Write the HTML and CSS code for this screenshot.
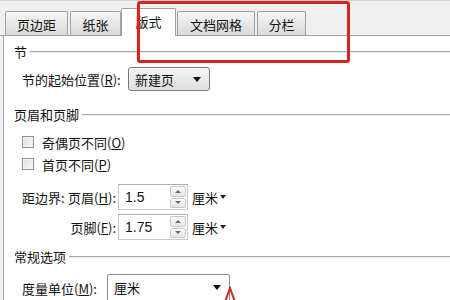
FILE: index.html
```html
<!DOCTYPE html>
<html lang="zh-CN">
<head>
<meta charset="utf-8">
<link rel="stylesheet" href="styles.css">
</head>
<body>
<div class="dialog">
  <div class="tabstrip">
    <div class="tab t1">页边距</div>
    <div class="tab t2">纸张</div>
    <div class="tab active t3">版式</div>
    <div class="tab t4">文档网格</div>
    <div class="tab t5">分栏</div>
  </div>
  <div class="panel">
    <div class="group-head g1"><span>节</span><i class="rule"></i></div>
    <div class="row r-start">
      <span class="lbl w-start">节的起始位置(<u>R</u>):</span>
      <div class="select sel-start"><span>新建页</span><b class="caret"></b></div>
    </div>

    <div class="group-head g2"><span>页眉和页脚</span><i class="rule"></i></div>
    <label class="check c1"><span class="box"></span>奇偶页不同(<u>O</u>)</label>
    <label class="check c2"><span class="box"></span>首页不同(<u>P</u>)</label>

    <div class="dist">
      <span class="pre">距边界:</span>
      <span class="dl">页眉(<u>H</u>):</span>
      <div class="spin"><span class="val">1.5</span><span class="btns"><i class="up"></i><i class="dn"></i></span></div>
      <span class="unit">厘米<b class="mini"></b></span>
      <span></span>
      <span class="dl">页脚(<u>F</u>):</span>
      <div class="spin"><span class="val">1.75</span><span class="btns"><i class="up"></i><i class="dn"></i></span></div>
      <span class="unit">厘米<b class="mini"></b></span>
    </div>

    <div class="group-head g3"><span>常规选项</span><i class="rule"></i></div>
    <div class="row r-unit">
      <span class="lbl w-unit">度量单位(<u>M</u>):</span>
      <div class="select sel-unit"><span>厘米</span><b class="caret"></b></div>
    </div>
  </div>
  <div class="highlight"></div>
  <svg class="arrow" width="14" height="16" viewBox="0 0 14 16"><path d="M2 16 L7 2 L12 16" fill="none" stroke="#c82a22" stroke-width="2"/></svg>
</div>
</body>
</html>
```
FILE: styles.css
```css
* { box-sizing: border-box; }
html, body { margin: 0; padding: 0; }
body {
  width: 450px;
  height: 300px;
  overflow: hidden;
  background: #f0f0f0;
  font-family: "Noto Sans CJK SC", "Liberation Sans", sans-serif;
  font-size: 13px;
  color: #111;
}
.dialog { position: relative; width: 450px; height: 300px; }

.tabstrip {
  display: flex;
  align-items: flex-end;
  height: 36px;
  padding-left: 5px;
  border-top: 1px solid #d4d4d4;
  border-bottom: 1px solid #a3a3a3;
  background: #f0f0f0;
}
.tab {
  height: 24px;
  display: flex;
  align-items: center;
  justify-content: center;
  border: 1px solid #a0a0a0;
  border-bottom: none;
  border-radius: 2px 2px 0 0;
  background: linear-gradient(#f6f6f6, #d9d9d9);
  line-height: 1;
  padding-top: 1px;
}
.tab.active {
  height: 28px;
  margin-bottom: -1px;
  background: #fff;
  padding-top: 0;
  padding-bottom: 2px;
}
.t1 { width: 63px; }
.t2 { width: 51px; margin-left: 2px; }
.t3 { width: 55px; }
.t4 { width: 78px; margin-left: 1px; }
.t5 { width: 49px; margin-left: 2px; }

.panel {
  margin-left: 3px;
  height: 264px;
  background: #fff;
  border-left: 1px solid #a3a3a3;
  padding-left: 10px;
  display: flex;
  flex-direction: column;
}

.group-head {
  height: 16px;
  display: flex;
  align-items: center;
  line-height: 16px;
}
.group-head .rule {
  flex: 1;
  height: 2px;
  margin-left: 3px;
  border-top: 1px solid #a8a8a8;
  border-bottom: 1px solid #ececec;
}
.g1 { margin-top: 8px; }
.g2 { margin-top: 16px; }
.g3 { margin-top: 9px; }

.row {
  display: flex;
  align-items: center;
  padding-left: 8px;
}
.r-start { margin-top: 7px; height: 24px; }
.r-unit { margin-top: 9px; height: 26px; align-items: flex-start; }

u { text-decoration: underline; text-underline-offset: 1px; }

.lbl { white-space: nowrap; }
.w-start { width: 106px; }
.w-unit { width: 85px; padding-top: 5px; }

.select {
  height: 24px;
  display: flex;
  align-items: center;
  justify-content: space-between;
  padding: 0 8px 0 6px;
  border: 1px solid #7a7a7a;
  border-radius: 3px;
  background: linear-gradient(#f5f5f5, #dedede);
}
.sel-start { width: 82px; }
.sel-unit {
  width: 123px;
  height: 30px;
  background: #fff;
  border-color: #8c8c8c;
  border-radius: 2px;
  padding-bottom: 3px;
}
.caret {
  width: 0; height: 0;
  border-left: 4px solid transparent;
  border-right: 4px solid transparent;
  border-top: 5px solid #111;
}

.check {
  display: flex;
  align-items: center;
  height: 20px;
  padding-left: 8px;
}
.c1 { margin-top: 9px; }
.c2 { margin-top: 2px; }
.box {
  width: 12px; height: 12px;
  border: 1px solid #8e8f8f;
  background: linear-gradient(135deg, #e0e0e0, #f8f8f8);
  box-shadow: inset 0 0 0 1px #f4f4f4;
  margin-right: 8px;
}

.dist {
  margin-top: 10px;
  padding-left: 8px;
  display: grid;
  grid-template-columns: 41px 53px 72px auto;
  grid-auto-rows: 26px;
  row-gap: 4px;
  align-items: center;
}
.dist .dl { text-align: right; white-space: nowrap; }
.dist .pre { white-space: nowrap; }
.spin {
  margin-left: 2px;
  height: 26px;
  display: flex;
  align-items: center;
  justify-content: space-between;
  border: 1px solid #c7c9cf;
  border-top-color: #abadb3;
  padding: 1px 1px 1px 6px;
  font-family: "Liberation Sans", "Noto Sans", sans-serif;
  font-size: 14px;
}
.btns {
  width: 16px;
  height: 22px;
  display: flex;
  flex-direction: column;
  gap: 1px;
}
.btns i {
  flex: 1;
  border: 1px solid #c9c9c9;
  border-radius: 2px;
  background: linear-gradient(#fafafa, #e6e6e6);
  display: flex;
  align-items: center;
  justify-content: center;
}
.btns i::after {
  content: "";
  width: 0; height: 0;
  border-left: 3px solid transparent;
  border-right: 3px solid transparent;
}
.btns .up::after { border-bottom: 3px solid #5a6e8a; }
.btns .dn::after { border-top: 3px solid #5a6e8a; }
.unit {
  padding-left: 4px;
  white-space: nowrap;
  display: flex;
  align-items: center;
}
.mini {
  margin-left: 2px;
  width: 0; height: 0;
  border-left: 3px solid transparent;
  border-right: 3px solid transparent;
  border-top: 4px solid #222;
}

.highlight {
  position: absolute;
  left: 137px;
  top: 1px;
  width: 213px;
  height: 62px;
  border: 3px solid #d8231f;
  border-radius: 3px;
}
.arrow {
  position: absolute;
  left: 223px;
  top: 286px;
}
```
